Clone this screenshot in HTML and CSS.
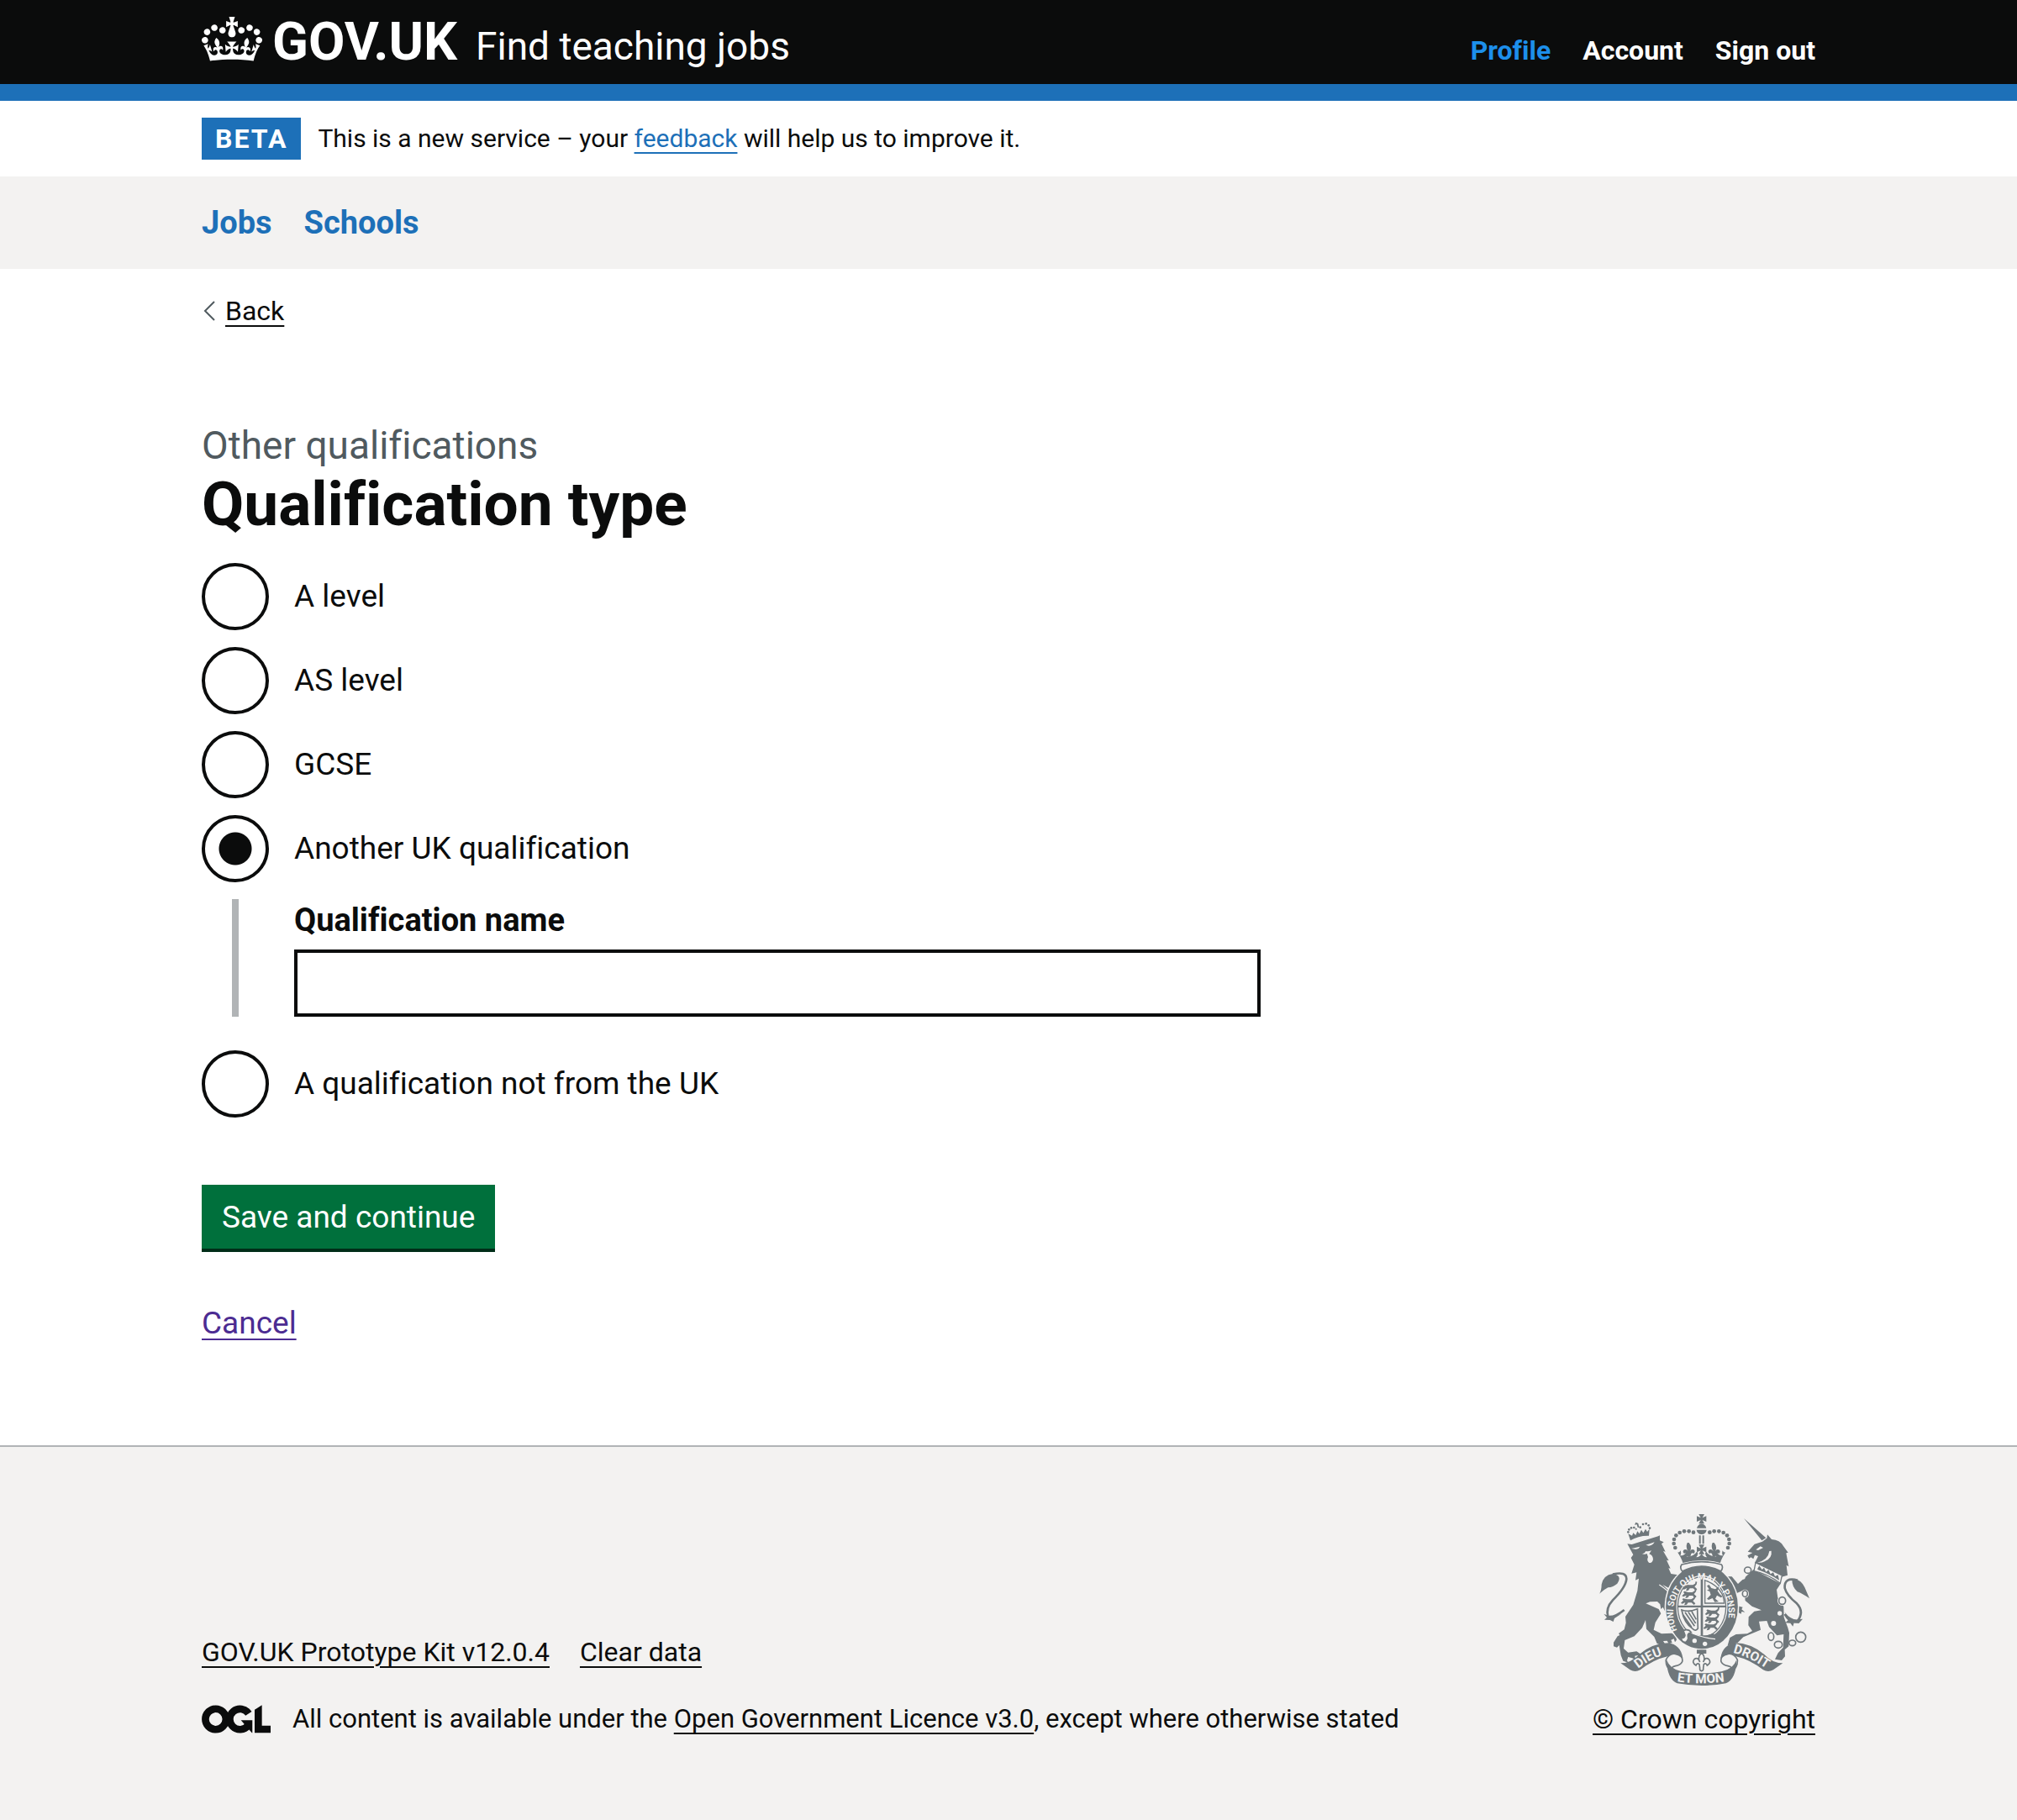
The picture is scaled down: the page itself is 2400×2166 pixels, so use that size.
FILE: index.html
```html
<!DOCTYPE html>
<html lang="en">
<head>
<meta charset="utf-8">
<meta name="viewport" content="width=device-width, initial-scale=1">
<title>Qualification type – Find teaching jobs – GOV.UK</title>
<link rel="stylesheet" href="styles.css">
</head>
<body>
<header class="header">
  <div class="container header-row">
    <div class="brand">
      <a class="logo" href="#">
        <svg class="crown" viewBox="0 0 132 97" aria-hidden="true"><path fill="currentColor" fill-rule="evenodd" d="M25 30.2c3.5 1.5 7.7-.2 9.1-3.7 1.5-3.6-.2-7.8-3.9-9.2-3.6-1.4-7.6.3-9.1 3.9-1.4 3.5.3 7.5 3.9 9zM9 39.5c3.6 1.5 7.8-.2 9.2-3.7 1.5-3.6-.2-7.8-3.9-9.1-3.6-1.5-7.6.2-9.1 3.8-1.4 3.5.3 7.5 3.8 9zM4.4 57.2c3.5 1.5 7.7-.2 9.1-3.8 1.5-3.6-.2-7.7-3.9-9.1-3.5-1.5-7.6.3-9.1 3.8-1.4 3.5.3 7.6 3.9 9.1zm38.3-21.4c3.5 1.5 7.7-.2 9.1-3.8 1.5-3.6-.2-7.7-3.9-9.1-3.6-1.5-7.6.3-9.1 3.8-1.3 3.6.4 7.7 3.9 9.1zm64.4-5.6c-3.6 1.5-7.8-.2-9.1-3.7-1.5-3.6.2-7.8 3.8-9.2 3.6-1.4 7.7.3 9.2 3.9 1.3 3.5-.4 7.5-3.9 9zm15.9 9.3c-3.6 1.5-7.7-.2-9.1-3.7-1.5-3.6.2-7.8 3.7-9.1 3.6-1.5 7.7.2 9.2 3.8 1.5 3.5-.3 7.5-3.8 9zm4.7 17.7c-3.6 1.5-7.8-.2-9.2-3.8-1.5-3.6.2-7.7 3.9-9.1 3.6-1.5 7.7.3 9.2 3.8 1.3 3.5-.4 7.6-3.9 9.1zM89.3 35.8c-3.6 1.5-7.8-.2-9.2-3.8-1.4-3.6.2-7.7 3.9-9.1 3.6-1.5 7.7.3 9.2 3.8 1.4 3.6-.3 7.7-3.9 9.1zM69.7 17.7l8.9 4.7V9.3l-8.9 2.8c-.2-.3-.5-.6-.9-.9L72.4 0H59.6l3.5 11.2c-.3.3-.6.5-.9.9l-8.8-2.8v13.1l8.8-4.7c.3.3.6.7.9.9l-5 15.4v.1c-.2.8-.4 1.6-.4 2.4 0 4.1 3.1 7.5 7 8.1h.2c.3 0 .7.1 1 .1.4 0 .7 0 1-.1h.2c4-.6 7.1-4.1 7.1-8.1 0-.8-.1-1.7-.4-2.4V34l-5.1-15.4c.4-.2.7-.6 1-.9zM66 92.8c16.9 0 32.8 1.1 47.1 3.2 4-16.9 8.9-26.7 14-33.5l-9.6-3.4c1 4.9 1.1 7.2 0 10.2-1.5-1.4-3-4.3-4.2-8.7L108.6 76c2.8-2 5-3.2 7.5-3.3-4.4 9.4-10 11.9-13.6 11.2-4.3-.8-6.3-4.6-5.6-7.9 1-4.7 5.7-5.9 8-.5 4.3-8.7-3-11.4-7.6-8.8 7.1-7.2 7.9-13.5 2.1-21.1-8 6.1-8.1 12.3-4.5 20.8-4.7-5.4-12.1-2.5-9.5 6.2 3.4-5.2 7.9-2 7.2 3.1-.6 4.3-6.4 7.8-13.5 7.2-10.3-.9-10.9-8-11.2-13.8 2.5-.5 7.1 1.8 11 7.3L80.2 60c-4.1 4.4-8 5.3-12.3 5.4 1.4-4.4 8-11.6 8-11.6H55.5s6.4 7.2 7.9 11.6c-4.2-.1-8-1-12.3-5.4l1.4 16.4c3.9-5.5 8.5-7.7 10.9-7.3-.3 5.8-.9 12.8-11.1 13.8-7.2.6-12.9-2.9-13.5-7.2-.7-5 3.8-8.3 7.1-3.1 2.7-8.7-4.6-11.6-9.4-6.2 3.7-8.5 3.6-14.7-4.6-20.8-5.8 7.6-5 13.9 2.2 21.1-4.7-2.6-11.9.1-7.7 8.8 2.3-5.5 7.1-4.2 8.1.5.7 3.3-1.3 7.1-5.7 7.9-3.5.7-9-1.8-13.5-11.2 2.5.1 4.7 1.3 7.5 3.3l-4.7-15.4c-1.2 4.4-2.7 7.2-4.3 8.7-1.1-3-.9-5.3 0-10.2l-9.5 3.4c5 6.9 9.9 16.7 14 33.5 14.8-2.1 30.8-3.2 47.7-3.2z"/></svg>
        <span>GOV.UK</span>
      </a>
      <a class="service" href="#">Find teaching jobs</a>
    </div>
    <nav class="account" aria-label="Account">
      <a class="account-current" href="#">Profile</a>
      <a href="#">Account</a>
      <a href="#">Sign out</a>
    </nav>
  </div>
</header>

<div class="container phase">
  <strong class="tag">BETA</strong>
  <span>This is a new service – your <a class="feedback" href="#">feedback</a> will help us to improve it.</span>
</div>

<nav class="primary" aria-label="Primary">
  <div class="container primary-row">
    <a href="#">Jobs</a>
    <a href="#">Schools</a>
  </div>
</nav>

<div class="container">
  <a class="back" href="#">
    <svg class="chevron" viewBox="0 0 14 24" aria-hidden="true"><path d="M13 1 2 12l11 11" fill="none" stroke="#505a5f" stroke-width="2"/></svg>
    <span>Back</span>
  </a>
  <main class="main">
    <form class="form">
      <fieldset class="fieldset">
        <legend class="legend">
          <span class="caption">Other qualifications</span>
          <h1 class="title">Qualification type</h1>
        </legend>
        <div class="radios">
          <div class="radio"><input type="radio" name="type" id="type-1"><label for="type-1">A level</label></div>
          <div class="radio"><input type="radio" name="type" id="type-2"><label for="type-2">AS level</label></div>
          <div class="radio"><input type="radio" name="type" id="type-3"><label for="type-3">GCSE</label></div>
          <div class="radio"><input type="radio" name="type" id="type-4" checked><label for="type-4">Another UK qualification</label></div>
          <div class="conditional">
            <label for="name">Qualification name</label>
            <input type="text" id="name" name="name">
          </div>
          <div class="radio"><input type="radio" name="type" id="type-5"><label for="type-5">A qualification not from the UK</label></div>
        </div>
      </fieldset>
      <button class="button" type="button">Save and continue</button>
      <p class="cancel"><a href="#">Cancel</a></p>
    </form>
  </main>
</div>

<footer class="footer">
  <div class="container footer-row">
    <div class="meta">
      <div class="meta-links">
        <a href="#">GOV.UK Prototype Kit v12.0.4</a>
        <a href="#">Clear data</a>
      </div>
      <div class="licence">
        <svg class="ogl" viewBox="0 0 483 196" aria-hidden="true">
          <g fill="none" stroke="currentColor" stroke-width="51">
            <circle cx="98" cy="98" r="72"/>
            <path d="M329 59A72 72 0 1 0 325 143"/>
          </g>
          <path fill="currentColor" d="M275 106h80v88h-3zM371 32 422 0v143h61v51H371z"/>
        </svg>
        <span>All content is available under the <a href="#">Open Government Licence v3.0</a>, except where otherwise stated</span>
      </div>
    </div>
    <a class="copyright" href="#">
      <svg class="crest" viewBox="72 66 750 612" aria-hidden="true">
        <defs>
          <path id="garter" d="M350 480A99 119 0 1 1 500 508"/>
          <path id="dieu" d="M211 618Q262 576 322 563"/>
          <path id="droit" d="M549 561Q606 574 672 620"/>
          <path id="mon" d="M350 664Q437 676 534 662"/>
          <g id="fleur"><path d="M0-26q13 16 3 31 5-9 14-6 8 6 0 14-4-4-9 0L5 24H-5L-8 13q-5-4-9 0-8-8 0-14 9-3 14 6-10-15-3-31z"/></g>
          <g id="pattee"><path d="M-10-17H10L3-4 17-10V10L3 4 10 17H-10L-3 4-17 10V-10L-3-4z"/></g>
          <g id="beast"><path d="M-24-7q4-6 9-2l9 2H8l8-5 2-8 5 2-2 9-7 8 9 9-5 5-9-8H-3l-5 7-9 2 4-10-11 5-5-3 9-9z"/></g>
        </defs>
        <!-- lion -->
        <g transform="translate(60 48)">
          <path d="M112 124l16 2 94-29 6-3v18l14 6-8 6 14 28-8-2 20 34-8-2 14 30-7-1 9 20 24 4-19 24-14 22-22-12 46 43 6 30 10 8-6 26-4 10-10-3-8-11-2 14-8-8-2-18-10 10-10-20-7 7-3-17-10-10-26 1-15 6 46 20 8 16-20 32-6 26 28 14 36-2 14 6 4 18-6 8-4-12-10 4 4 10-12 4-6-11-14 1 6 10-14 4-14-5-10-24-28-28-3-32-12 28-28 30-34 14-4 30 16 14 30-4 18 12-4 12-8-10-12 2 2 14-12-6-14-4-4 12 4 8-18-6-8-20-6-36-8 8-12-4v-14l14-22 8-4-4-6 20-14 6-24-2-22 28-42 15-50 5-44-12 6 4-28-18 4 10-32-12-24 8-11z"/>
          <path d="M12 302q8-11 8-33 7-34 40-38 36 6 16 35-14 12-33 14-15 8-31 22z"/>
          <path fill="none" stroke="currentColor" stroke-width="8" d="M60 233q48-12 49 16-2 30-49 76-26 28-17 59 23 4 58-24"/>
          <path d="M28 374q28 16 62 0l-24 16-4 12-12-6-20-1 9-8z"/>
          <path d="M115 88l8 24q28-18 66-17l2-24-8 10-6-10-8 14-7-11-7 14-7-9-6 14-9-8-4 10z"/>
          <g class="crest-dots"><circle cx="115" cy="82" r="4"/><circle cx="118" cy="73" r="4"/><circle cx="126" cy="67" r="4"/><circle cx="136" cy="66" r="4"/><circle cx="143" cy="71" r="3"/><circle cx="158" cy="65" r="4"/><circle cx="168" cy="54" r="4"/><circle cx="179" cy="52" r="4"/><circle cx="188" cy="58" r="4"/><circle cx="192" cy="68" r="4"/><path d="M142 47l9 4 3 14-5 1-3-11-8 1z"/></g>
          <g class="crest-light"><path d="M126 141l31-7q-6 11-16 9zM178 128l31-10q-8 13-20 13zM163 158q9 4 15-8 8 2 20-2l-8 12q14 5 14 20-4 15-15 11-9-7-3-20l-4-12q-10 5-19-1z"/></g>
          <path fill="none" stroke="#f3f2f1" stroke-width="4" d="M226 270q34 22 52 46"/>
        </g>
        <!-- unicorn -->
        <g transform="translate(480 48)">
          <path d="M108 33l79 70-15 9zM122 152l24-27 28-9 16-12 2-13 15 17q30 2 42 24l17 23-7 2 9 48-8-5 4 36-21 6-38-16-50-26-8-8 12-24-12-4-5 14-9-6-6 4-6-10 18-10z"/>
          <path d="M142 216l97 50-14 22 4 28 21 32 1 38 14 38 5 18-2 48-14 12 1 24-12 14-24-4 11-22 18-20 2-47-24 4-28-30-8-22-28 2 6 30-62 26-20 20-36 10 8-28 22-12 40-2 18-10-14-20 1-30 20-20 26-4-34-14-24-20-4-38-28 12-16 20 5 21 34 8-4 8 12 10-12-2-2 8-34-18-22-36 20-26 6-14-14-18-14-2-12-8 15-12 22 1 22 26z"/>
          <path class="crest-light" d="M151 145l16-12 10 5-18 9zM206 149q4 27-24 38-12 6-26 4 39-10 43-41z"/>
          <path fill="#f3f2f1" stroke="currentColor" stroke-width="4" d="M150 191l94 46-6 28q-46-34-94-44z"/>
          <path d="M157 212l6-10 10 14 7-7 7 15 9-7 7 15 10-6 6 14 11-5 4 19q-36-24-77-38z"/>
          <path d="M280 254q28-10 45 25l17 40q-24-17-43-24-19-18-19-41z"/>
          <path fill="none" stroke="currentColor" stroke-width="8" d="M300 254q-49-13-46 28 7 26 43 55 28 29 2 64-27 8-45-26"/>
          <path d="M318 392l-14 16-17-2-4 13-9-12-18-1 10-9-12-29q22 28 46 26z"/>
          <g fill="none" stroke="currentColor" stroke-width="5"><ellipse cx="122" cy="218" rx="12" ry="11"/><ellipse cx="205" cy="455" rx="10" ry="14"/><ellipse cx="231" cy="484" rx="14" ry="12"/><ellipse cx="281" cy="478" rx="12" ry="10"/><circle cx="311" cy="457" r="18"/></g>
          <g class="crest-light"><circle cx="105" cy="243" r="8"/><circle cx="236" cy="372" r="8"/><circle cx="214" cy="408" r="9"/><ellipse cx="112" cy="302" rx="14" ry="15"/><ellipse cx="245" cy="327" rx="17" ry="18"/></g>
          <g fill="none" stroke="currentColor" stroke-width="5"><ellipse cx="112" cy="302" rx="9" ry="11"/><ellipse cx="245" cy="327" rx="12" ry="13"/></g>
        </g>
        <!-- garter and shield -->
        <ellipse cx="438" cy="397" rx="133" ry="153" fill="#f3f2f1"/>
        <ellipse cx="438" cy="397" rx="110" ry="131" fill="none" stroke="currentColor" stroke-width="37"/>
        <ellipse cx="438" cy="397" rx="86" ry="107" fill="none" stroke="currentColor" stroke-width="4"/>
        <path d="M434 290h8v102h83v7h-83v105h-8V399h-82v-7h82z"/>
        <g>
          <use href="#beast" x="398" y="326"/><use href="#beast" x="396" y="352"/><use href="#beast" x="392" y="377"/>
          <use href="#beast" x="478" y="417"/><use href="#beast" x="477" y="442"/><use href="#beast" x="472" y="467"/>
          <path fill="none" stroke="currentColor" stroke-width="4" d="M449 302v82h69q-2-56-69-82z"/>
          <path d="M456 322l8-4 8 12 14 4 14-10-6 16 8 12 10 8-6 4-14-8-6 12 12 10-14 2-8-14-14 6-6-4 14-14-4-12-10-4 8-4z"/>
          <path fill="none" stroke="currentColor" stroke-width="5" d="M366 408q24 10 56-4l2 70q-8 12-18 2-32-22-40-68zM378 416l34 50M390 416l26 40M402 414l16 28M370 424l32 46"/>
        </g>
        <path d="M366 480q-6 30 20 44 50 28 122-12l-30-20q-40 16-84-4-10-12-28-8z"/>
        <path fill="none" stroke="#f3f2f1" stroke-width="4" d="M392 486q46 22 94 26"/>
        <path fill="#f3f2f1" stroke="currentColor" stroke-width="5" d="M372 482q18-8 28 6-14 4-12 14 4 10-6 20-16 4-18-14 12 2 14-10z"/>
        <g class="crest-light"><circle cx="412" cy="518" r="8"/><circle cx="449" cy="529" r="8"/></g>
        <text class="crest-text"><textPath href="#garter">HONI SOIT QUI MAL Y PENSE</textPath></text>
        <!-- crown -->
        <use href="#pattee" x="437" y="83"/>
        <path d="M420 116q4-14 17-16 13 2 17 16zM419 122h36q-2 15-18 16-16-1-18-16zM428 142h6v30h-6zM440 142h6v30h-6z"/>
        <g class="crest-dots">
          <circle cx="408" cy="131" r="7"/><circle cx="392" cy="127" r="7"/><circle cx="375" cy="127" r="7"/><circle cx="359" cy="132" r="7"/><circle cx="346" cy="142" r="7"/><circle cx="339" cy="156" r="7"/><circle cx="338" cy="171" r="7"/><circle cx="343" cy="186" r="7"/>
          <circle cx="466" cy="131" r="7"/><circle cx="482" cy="127" r="7"/><circle cx="499" cy="127" r="7"/><circle cx="515" cy="132" r="7"/><circle cx="528" cy="142" r="7"/><circle cx="535" cy="156" r="7"/><circle cx="536" cy="171" r="7"/><circle cx="531" cy="186" r="7"/>
        </g>
        <use href="#fleur" x="392" y="194"/><use href="#fleur" x="482" y="194"/><use href="#pattee" x="437" y="192"/>
        <path d="M346 194q8 16 16 2 4 14-2 18 18 0 22-14 10 14 2 18 26-2 36-18l4 4q0 10-6 16 14-2 19-14 5 12 19 14-6-6-6-16l4-4q10 16 36 18-8-4 2-18 4 14 22 14-6-4-2-18 8 14 16-2-20 28-24 46-66-18-134 0-4-18-24-46z"/>
        <path fill="#f3f2f1" stroke="currentColor" stroke-width="5" d="M366 246q71-20 142 0 8 10-2 24-69-36-138 0-10-12-2-24z"/>
        <!-- mottos -->
        <path d="M148 598Q185 598 215 566 265 526 318 526 362 532 370 579 362 595 346 595 340 572 318 573 265 585 218 622 200 632 182 622z"/>
        <path d="M727 598Q690 598 660 566 610 526 557 526 513 532 505 579 513 595 529 595 535 572 557 573 610 585 657 622 675 632 693 622z"/>
        <path fill="#f3f2f1" stroke="currentColor" stroke-width="5" d="M343 565q30 6 25 28-6 12-24 15-20 4-14 20-22-16-20-42 12-24 33-21zM532 565q-30 6-25 28 6 12 24 15 20 4 14 20 22-16 20-42-12-24-33-21z"/>
        <path d="M312 586q12 34 54 42 70 12 142 0 42-8 54-42-2 70-38 84-86 16-174 0-36-14-38-84z"/>
        <path d="M420 550h34v14h-34z"/>
        <path fill="none" stroke="currentColor" stroke-width="5" d="M437 560q16 18 6 34 8-20 20-10 10 12-6 22-4-10-12-4l-2 14q2 8-6 10-8-2-6-10l-2-14q-8-6-12 4-16-10-6-22 12-10 20 10-10-16 6-34z"/>
        <text class="crest-text crest-motto"><textPath href="#dieu">DIEU</textPath></text>
        <text class="crest-text crest-motto"><textPath href="#mon">ET MON</textPath></text>
        <text class="crest-text crest-motto"><textPath href="#droit">DROIT</textPath></text>
      </svg>
      <span>© Crown copyright</span>
    </a>
  </div>
</footer>
</body>
</html>
```
FILE: styles.css
```css
* { box-sizing: border-box; }

body {
  margin: 0;
  min-height: 100vh;
  display: flex;
  flex-direction: column;
  background: #fff;
  color: #0b0c0c;
  font-family: Roboto, "Liberation Sans", sans-serif;
  font-size: 37px;
  font-variant-ligatures: none;
  line-height: 50px;
}

a {
  color: inherit;
  text-decoration-thickness: 2px;
  text-underline-offset: 6px;
}

.container {
  width: 100%;
  max-width: 2040px;
  margin: 0 auto;
  padding: 0 60px;
}

/* Header */
.header { background: #0b0c0c; color: #fff; border-bottom: 20px solid #1d70b8; }
.header a { text-decoration: none; }
.header-row { display: flex; justify-content: space-between; align-items: baseline; height: 100px; padding-top: 20px; }
.brand { display: flex; align-items: baseline; gap: 22px; }
.logo { display: flex; align-items: baseline; gap: 12px; font-size: 63px; font-weight: 700; line-height: 60px; }
.crown { width: 72px; height: 53px; align-self: flex-start; }
.service { font-size: 46px; }
.account { display: flex; gap: 38px; font-size: 32px; font-weight: 700; }
.account-current { color: #1d8feb; }

/* Phase banner */
.phase { display: flex; align-items: center; gap: 20px; height: 90px; font-size: 30px; }
.tag { padding: 0 16px; background: #1d70b8; color: #fff; font-size: 32px; letter-spacing: 2px; }
.feedback { color: #1d70b8; }

/* Primary navigation */
.primary { background: #f3f2f1; }
.primary-row { display: flex; gap: 38px; padding-top: 30px; padding-bottom: 30px; font-size: 38px; font-weight: 700; }
.primary a { color: #1d70b8; text-decoration: none; }

/* Content */
.back { display: inline-flex; align-items: center; gap: 12px; margin-top: 30px; padding-left: 2px; font-size: 32px; line-height: 40px; text-decoration: none; }
.back span { text-decoration: underline; text-decoration-thickness: 2px; text-underline-offset: 6px; }
.chevron { width: 14px; height: 24px; }
.main { padding: 105px 0 120px; }
.form { width: 66%; max-width: 1260px; }
.fieldset { margin: 0; padding: 0; border: 0; }
.legend { padding: 0; }
.caption { display: block; font-size: 46px; line-height: 60px; color: #505a5f; }
.title { margin: 0; font-size: 73px; line-height: 80px; }
.radios { display: flex; flex-direction: column; gap: 20px; padding-top: 30px; }
.radio { display: flex; align-items: center; gap: 30px; }
.radio input {
  appearance: none;
  width: 80px;
  height: 80px;
  margin: 0;
  border: 4px solid #0b0c0c;
  border-radius: 50%;
  background: #fff;
}
.radio input:checked { background: radial-gradient(circle, #0b0c0c 19px, #fff 20px); }
.conditional {
  display: flex;
  flex-direction: column;
  gap: 10px;
  margin: 0 0 20px 36px;
  padding-left: 66px;
  border-left: 8px solid #b1b4b6;
  font-size: 38px;
  font-weight: 700;
}
.conditional input {
  width: 100%;
  height: 80px;
  padding: 10px;
  border: 4px solid #0b0c0c;
  border-radius: 0;
  font: inherit;
  font-weight: 400;
}
.button {
  margin: 80px 0 0;
  padding: 14px 24px 12px;
  border: 0;
  background: #00703c;
  box-shadow: 0 4px 0 #002d18;
  color: #fff;
  font: inherit;
}
.cancel { margin: 64px 0 0; color: #4c2c92; }

/* Footer */
.footer { flex: 1; padding: 80px 0 90px; border-top: 2px solid #b1b4b6; background: #f3f2f1; font-size: 32px; line-height: 40px; }
.footer-row { display: flex; justify-content: space-between; align-items: flex-end; }
.meta { display: flex; flex-direction: column; gap: 40px; }
.meta-links { display: flex; gap: 36px; }
.licence { display: flex; align-items: center; gap: 26px; font-size: 31px; }
.ogl { width: 82px; height: 34px; }
.copyright { display: flex; flex-direction: column; align-items: center; gap: 20px; }
.crest { width: 250px; height: 204px; color: #6f777b; fill: currentColor; }
.crest-light { fill: #f3f2f1; }
.crest-text { fill: #f3f2f1; font-size: 32px; font-weight: 700; }
.crest-motto { font-size: 46px; }
```
